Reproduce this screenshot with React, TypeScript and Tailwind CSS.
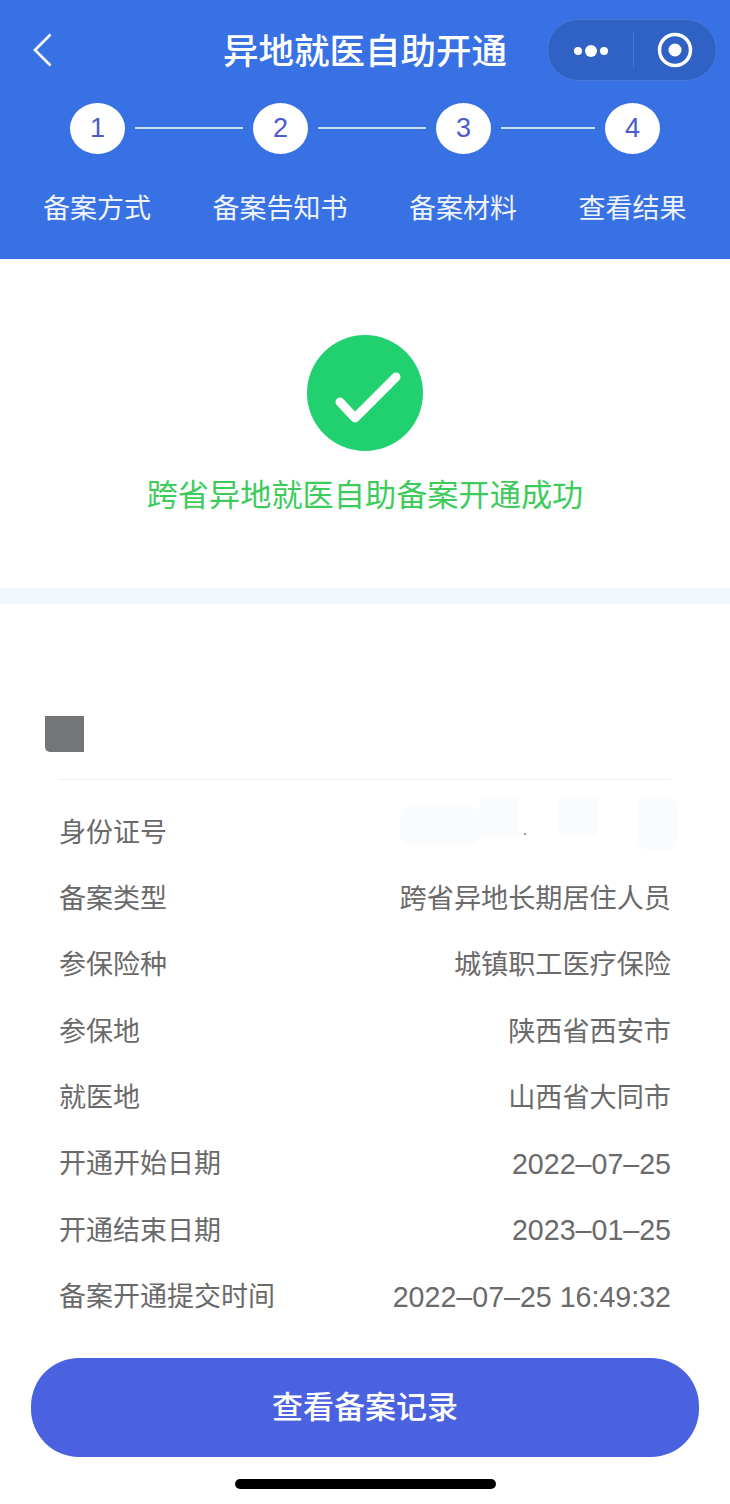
// App.tsx
const FONT = 'font-["Liberation_Sans","Noto_Sans_CJK_SC",sans-serif]'

const STEPS = ['备案方式', '备案告知书', '备案材料', '查看结果']

const ROWS: { label: string; value: string; digits?: boolean }[] = [
  { label: '身份证号', value: '' },
  { label: '备案类型', value: '跨省异地长期居住人员' },
  { label: '参保险种', value: '城镇职工医疗保险' },
  { label: '参保地', value: '陕西省西安市' },
  { label: '就医地', value: '山西省大同市' },
  { label: '开通开始日期', value: '2022–07–25', digits: true },
  { label: '开通结束日期', value: '2023–01–25', digits: true },
  { label: '备案开通提交时间', value: '2022–07–25 16:49:32', digits: true },
]

function StepCircle({ n }: { n: number }) {
  return (
    <div className="w-[55px] h-[51px] rounded-[50%] bg-white flex items-center justify-center text-[27px] text-[#4a5bd0]">
      {n}
    </div>
  )
}

function StepLine({ width }: { width: string }) {
  return <div className={`h-[2px] mx-[10px] -mt-[2px] bg-[#c4e0ee] ${width}`} />
}

function Capsule() {
  return (
    <div className="w-[170px] h-[62px] rounded-full bg-[#2f62c4] border border-[#4a7ad6] flex items-center">
      <div className="w-[85px] pt-[2px] flex items-center justify-center gap-[3px]">
        <span className="w-[8px] h-[8px] rounded-full bg-white" />
        <span className="w-[12px] h-[12px] rounded-full bg-white" />
        <span className="w-[8px] h-[8px] rounded-full bg-white" />
      </div>
      <div className="w-px h-[36px] bg-[#4a7ad6]" />
      <div className="flex-1 flex items-center justify-center">
        <svg width="36" height="36" viewBox="0 0 36 36">
          <circle cx="18" cy="18" r="15.5" fill="none" stroke="#fff" strokeWidth="3.5" />
          <circle cx="18" cy="18" r="6.5" fill="#fff" />
        </svg>
      </div>
    </div>
  )
}

export default function App() {
  return (
    <div className={`${FONT} w-[730px] h-[1504px] bg-white flex flex-col overflow-hidden`}>
      {/* Header */}
      <header className="h-[259px] bg-[#3871e3] text-white pt-[19px]">
        <div className="grid grid-cols-[1fr_auto_1fr] items-center h-[62px]">
          <div className="pl-[33px]">
            <svg width="19" height="34" viewBox="0 0 19 34" fill="none">
              <path d="M17.5 1.5 2 17l15.5 15.5" stroke="#fff" strokeWidth="2.6" />
            </svg>
          </div>
          <h1 className="mt-[4px] text-[35.5px] leading-[50px] font-medium whitespace-nowrap">异地就医自助开通</h1>
          <div className="flex justify-end pr-[13px]">
            <Capsule />
          </div>
        </div>

        <div className="flex items-center pl-[70px] mt-[22px]">
          <StepCircle n={1} />
          <StepLine width="w-[108px]" />
          <StepCircle n={2} />
          <StepLine width="w-[108px]" />
          <StepCircle n={3} />
          <StepLine width="w-[94px]" />
          <StepCircle n={4} />
        </div>

        <div className="flex gap-[61.5px] pl-[43px] mt-[35px] text-[27px] leading-[40px] text-[#eef3fc] whitespace-nowrap">
          {STEPS.map(s => (
            <span key={s}>{s}</span>
          ))}
        </div>
      </header>

      {/* Result */}
      <section className="h-[329px] pt-[76px] flex flex-col items-center">
        <div className="w-[116px] h-[116px] rounded-full bg-[#21d06e]">
          <svg width="116" height="116" viewBox="0 0 116 116" fill="none">
            <path d="M33 67 48 83 89 42" stroke="#fff" strokeWidth="9" strokeLinecap="round" strokeLinejoin="round" />
          </svg>
        </div>
        <p className="mt-[25px] text-[31.2px] leading-[40px] text-[#3dcc5c] whitespace-nowrap">跨省异地就医自助备案开通成功</p>
      </section>

      <div className="h-[16px] bg-[#f3f8fc]" />

      {/* Details */}
      <section className="pt-[112px]">
        <div className="ml-[45px] w-[39px] h-[36px] bg-[#747576] rounded-bl-[5px]" />
        <div className="mx-[59px] mt-[27px] border-t border-[#eef0f2]" />
        <div className="relative mx-[59px] pt-[20px] text-[27px] text-[#6a6a6a]">
          {/* faint blur left on the redacted id number */}
          <div className="absolute left-[341px] top-[27px] w-[80px] h-[38px] rounded-[8px] bg-[#fafbfd]" />
          <div className="absolute left-[421px] top-[17px] w-[39px] h-[40px] bg-[#fafbfd]" />
          <div className="absolute left-[500px] top-[17px] w-[39px] h-[39px] bg-[#fafbfd]" />
          <div className="absolute left-[579px] top-[17px] w-[39px] h-[53px] rounded-[10px] bg-[#fafbfd]" />
          <div className="absolute left-[465px] top-[53px] w-[2px] h-[2px] rounded-full bg-[#777]" />
          {ROWS.map(r => (
            <div key={r.label} className="relative h-[66.3px] flex items-center justify-between whitespace-nowrap">
              <span>{r.label}</span>
              <span className={r.digits ? 'text-[28.6px]' : 'text-[27.15px]'}>{r.value}</span>
            </div>
          ))}
        </div>
      </section>

      {/* Footer */}
      <div className="mx-[31px] mt-[28px] h-[99px] rounded-[48px] bg-[#4a62e0] flex items-center justify-center text-white text-[31px] font-medium">
        查看备案记录
      </div>
      <div className="mx-auto mt-[22px] w-[261px] h-[10px] rounded-full bg-black" />
    </div>
  )
}
